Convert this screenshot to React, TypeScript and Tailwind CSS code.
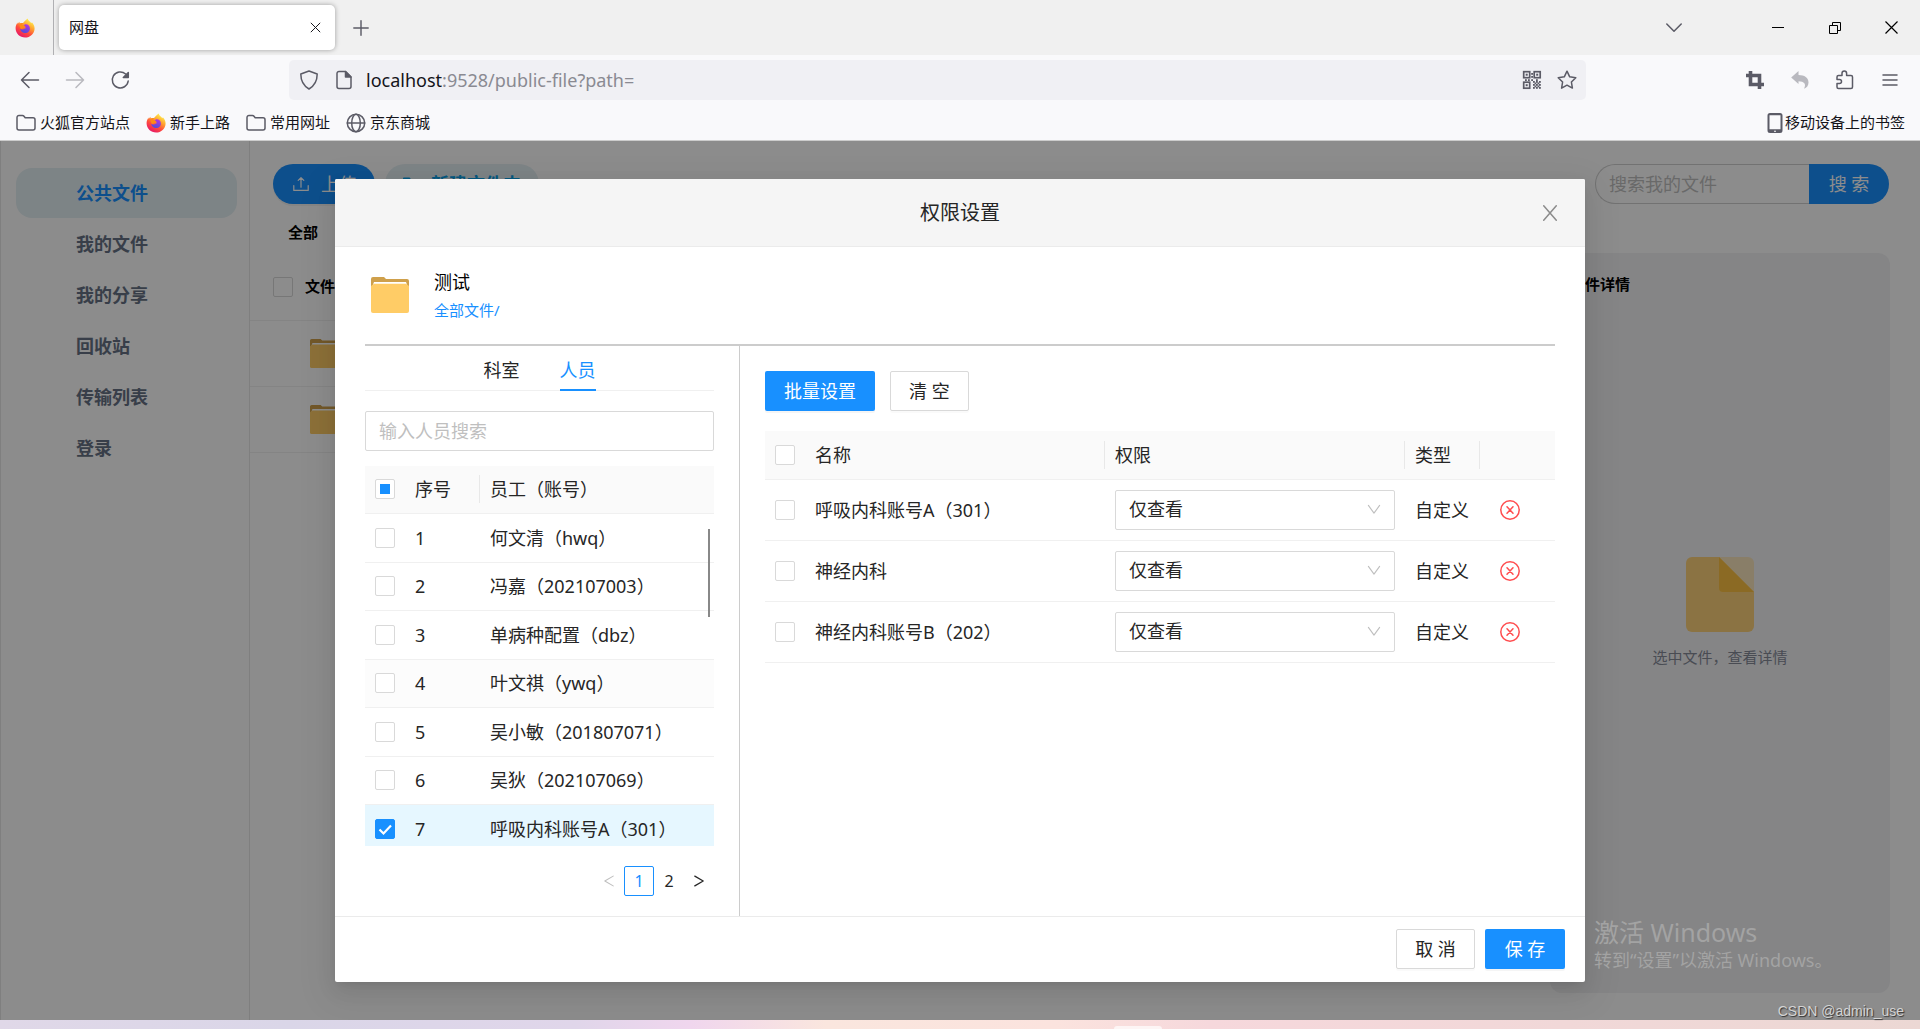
import { useState, type ReactNode } from "react";
import clsx from "clsx";

interface Person {
  id: number;
  name: string;
}

interface Permission {
  id: number;
  name: string;
}

const navItems = ["公共文件", "我的文件", "我的分享", "回收站", "传输列表", "登录"];

const people: Person[] = [
  { id: 1, name: "何文清（hwq）" },
  { id: 2, name: "冯嘉（202107003）" },
  { id: 3, name: "单病种配置（dbz）" },
  { id: 4, name: "叶文祺（ywq）" },
  { id: 5, name: "吴小敏（201807071）" },
  { id: 6, name: "吴狄（202107069）" },
  { id: 7, name: "呼吸内科账号A（301）" },
];

const initialPermissions: Permission[] = [
  { id: 1, name: "呼吸内科账号A（301）" },
  { id: 2, name: "神经内科" },
  { id: 3, name: "神经内科账号B（202）" },
];

/* ---------- icons ---------- */

function FirefoxIcon() {
  return (
    <svg viewBox="0 0 20 20" className="size-5 shrink-0" aria-hidden="true">
      <defs>
        <linearGradient id="ff-body" x1="0.85" y1="0.1" x2="0.3" y2="1">
          <stop offset="0" stopColor="#fff44f" />
          <stop offset="0.35" stopColor="#ffa02f" />
          <stop offset="0.65" stopColor="#ff4a3d" />
          <stop offset="1" stopColor="#e5156b" />
        </linearGradient>
        <linearGradient id="ff-core" x1="0.7" y1="0" x2="0.3" y2="1">
          <stop offset="0" stopColor="#b833e1" />
          <stop offset="1" stopColor="#4a4fd8" />
        </linearGradient>
      </defs>
      <path
        fill="url(#ff-body)"
        d="M12.6.6c.6 2.2 2.4 3 3.8 4.7l.5-1C18.600 6 19.700 8.300 19.600 10.800 19.400 15.800 15.200 19.600 10.100 19.600 4.900 19.600.7 15.600.6 10.600.5 8.500 1.200 6.500 2.500 4.500L2.700 6l1.600-2.200.5 1.800c1-.5 2-.7 3.200-.5C9.300 3.500 10.700 2 12.600.6z"
      />
      <path
        fill="url(#ff-core)"
        d="M10.200 6.200c2.600-.4 4.700 1.600 4.700 4.200 0 2.700-2.100 4.700-4.800 4.700-2.600 0-4.700-1.800-4.900-4.300 1 .8 2.200.9 3.300.4 1-.5 1.500-1 2.600-1 0-.9-1.500-.9-2.500-1.200-.6-.3 0-1.700 1.600-2.800z"
      />
      <path fill="#ff8a16" d="M4.800 5.600c1-.5 2-.7 3.200-.5-.6.800-.9 1.400-.9 2 .8.500 2.200.6 3.100 1 .3.500-.1 1.200-1 1.500-.9.400-1.600 1.400-3 1.300-.6-.5-1-.9-1.200-1.600-.5-1.200-.7-2.500-.2-3.700z" />
    </svg>
  );
}

function LineIcon({ size = 20, width = 1.5, className, children }: { size?: number; width?: number; className?: string; children: ReactNode }) {
  return (
    <svg
      width={size}
      height={size}
      viewBox="0 0 20 20"
      fill="none"
      stroke="currentColor"
      strokeWidth={width}
      strokeLinecap="round"
      strokeLinejoin="round"
      className={clsx("shrink-0", className)}
      aria-hidden="true"
    >
      {children}
    </svg>
  );
}

function BookmarkFolderIcon() {
  return (
    <LineIcon>
      <path d="M1 15V4.500A2 2 0 0 1 3 2.500h3.500a2 2 0 0 1 1.500.7l1.200 1.600H17a2 2 0 0 1 2 2V15a2 2 0 0 1-2 2H3a2 2 0 0 1-2-2z" />
    </LineIcon>
  );
}

function QrIcon() {
  const dots = [
    [11, 11], [14, 11], [17, 11], [12.500, 12.500], [15.500, 12.500], [11, 14], [14, 14], [17, 14],
    [12.500, 15.500], [15.500, 15.500], [11, 17], [14, 17], [17, 17], [9.200, 3], [9.200, 6], [3, 9.200], [6, 9.200], [9.200, 9.200], [14, 9.200],
  ];
  return (
    <svg viewBox="0 0 20 20" className="size-5" fill="currentColor" aria-hidden="true">
      {[[1, 1], [11.500, 1], [1, 11.500]].map(([x, y]) => (
        <g key={`${x}-${y}`}>
          <rect x={x + 0.700} y={y + 0.700} width="6" height="6" fill="none" stroke="currentColor" strokeWidth="1.700" />
          <rect x={x + 2.700} y={y + 2.700} width="2" height="2" />
        </g>
      ))}
      {dots.map(([x, y]) => (
        <rect key={`${x}-${y}`} x={x} y={y} width="1.800" height="1.800" />
      ))}
    </svg>
  );
}

function FolderIcon({ className }: { className: string }) {
  return (
    <svg viewBox="0 0 38 36" preserveAspectRatio="none" className={clsx("shrink-0", className)} aria-hidden="true">
      <path fill="#cfa04b" d="M0 2a2 2 0 0 1 2-2h11l2 2h21a2 2 0 0 1 2 2v8H0z" />
      <path fill="#fff" d="M3 5h32l1.500 4h-35z" />
      <path fill="#ffcc66" d="M0 9l3-2.200h32L38 9v25a2 2 0 0 1-2 2H2a2 2 0 0 1-2-2z" />
    </svg>
  );
}

/* ---------- browser chrome ---------- */

function IconButton({ label, className, children }: { label: string; className?: string; children: ReactNode }) {
  return (
    <button type="button" aria-label={label} className={clsx("flex items-center justify-center", className)}>
      {children}
    </button>
  );
}

function BrowserChrome() {
  return (
    <header className="text-[15px] text-[#15141a]">
      {/* Tab strip */}
      <div className="flex h-[55px] items-center bg-[#f0f0f0]">
        <div className="flex h-full w-[54px] items-center border-r border-[#b0b0b3] pl-[15px]">
          <FirefoxIcon />
        </div>
        <div className="ml-[5px] flex h-[45px] w-[276px] items-center justify-between rounded-[5px] bg-white pl-[10px] pr-2 shadow-[0_0_5px_rgba(0,0,0,0.35)]">
          <span>网盘</span>
          <IconButton label="关闭标签页" className="size-6">
            <LineIcon size={11} width={1.800}>
              <path d="M2 2l16 16M18 2L2 18" />
            </LineIcon>
          </IconButton>
        </div>
        <IconButton label="新建标签页" className="ml-[14px] size-6 text-[#5b5b66]">
          <LineIcon size={16} width={1.800}>
            <path d="M10 1v18M1 10h18" />
          </LineIcon>
        </IconButton>
        <div className="ml-auto flex items-center pr-[13px]">
          <IconButton label="列出所有标签页" className="mr-[72px] size-8 text-[#5b5b66]">
            <LineIcon size={16} width={1.900}>
              <path d="M1 5l9 9 9-9" />
            </LineIcon>
          </IconButton>
          <IconButton label="最小化" className="size-8">
            <svg width="12" height="12" className="text-black" aria-hidden="true">
              <path d="M0 5.500h12" stroke="currentColor" />
            </svg>
          </IconButton>
          <IconButton label="还原" className="ml-[25px] size-8">
            <svg width="12" height="12" fill="none" stroke="#000" aria-hidden="true">
              <path d="M.5 3.500h8v8h-8zM3.500 3.500v-3h8v8h-3" />
            </svg>
          </IconButton>
          <IconButton label="关闭" className="ml-6 size-8">
            <svg width="13" height="13" stroke="#000" strokeWidth="1.200" aria-hidden="true">
              <path d="M.5.5l12 12M12.500.5l-12 12" />
            </svg>
          </IconButton>
        </div>
      </div>

      {/* Address bar */}
      <div className="flex h-[50px] items-center bg-[#f9f9fb] text-[#5b5b66]">
        <div className="flex w-[289px] shrink-0 items-center gap-[25px] pl-5">
          <IconButton label="后退">
            <LineIcon>
              <path d="M18.500 10H1.500M9 2.500L1.500 10 9 17.500" />
            </LineIcon>
          </IconButton>
          <IconButton label="前进" className="opacity-40">
            <LineIcon>
              <path d="M1.500 10h17M11 2.500l7.500 7.500-7.500 7.500" />
            </LineIcon>
          </IconButton>
          <IconButton label="刷新">
            <LineIcon>
              <path d="M15.600 4a8 8 0 1 0 2.600 7" />
              <path d="M18.300 2.500v5h-5z" fill="currentColor" />
            </LineIcon>
          </IconButton>
        </div>
        <div className="flex h-10 flex-1 items-center rounded-[5px] bg-[#f0f0f4] pl-[10px] pr-[9px]">
          <LineIcon>
            <path d="M10 1l8.200 3c0 7-2.200 11.500-8.200 15C4 15.500 1.800 11 1.800 4z" />
          </LineIcon>
          <LineIcon className="ml-[15px]">
            <path d="M11.500 1.500H5a2 2 0 0 0-2 2v13a2 2 0 0 0 2 2h10a2 2 0 0 0 2-2V7z" />
            <path d="M11.500 1.500V7H17z" fill="currentColor" />
          </LineIcon>
          <p className="ml-3 text-[18px] leading-6 text-[#8a8a92]">
            <span className="text-[#15141a]">localhost</span>:9528/public-file?path=
          </p>
          <IconButton label="二维码" className="ml-auto">
            <QrIcon />
          </IconButton>
          <IconButton label="添加书签" className="ml-[15px]">
            <LineIcon>
              <path d="M10 1.200l2.700 5.600 6.100.9-4.400 4.300 1 6.100-5.400-2.900-5.400 2.900 1-6.100L1.200 7.700l6.100-.9z" />
            </LineIcon>
          </IconButton>
        </div>
        <div className="flex items-center gap-[25px] pl-[159px] pr-5">
          <IconButton label="截图">
            <svg viewBox="0 0 20 20" className="size-5" fill="none" stroke="currentColor" strokeWidth="3.600" aria-hidden="true">
              <path d="M5.500 1v13.500H19M1 5.500h13.500V19" />
            </svg>
          </IconButton>
          <IconButton label="撤销" className="opacity-40">
            <svg viewBox="0 0 20 20" className="size-5" fill="currentColor" aria-hidden="true">
              <path d="M1.200 7.500L8.500 1v4c6 0 10 2.700 10 7.500 0 3-1.700 5.300-4.500 6.200 2.600-4.600.2-7.500-5.500-7.500V14z" />
            </svg>
          </IconButton>
          <IconButton label="扩展">
            <LineIcon>
              <path d="M3.500 18.500a1.500 1.500 0 0 1-1.500-1.500v-3.500h2.500a2 2 0 0 0 0-4H2V7a1.500 1.500 0 0 1 1.500-1.500H7V3.300a2.300 2.300 0 0 1 4.600 0v2.200H16A1.500 1.500 0 0 1 17.500 7v10a1.500 1.500 0 0 1-1.500 1.500z" />
            </LineIcon>
          </IconButton>
          <IconButton label="菜单">
            <LineIcon>
              <path d="M3 5h14M3 10h14M3 15h14" />
            </LineIcon>
          </IconButton>
        </div>
      </div>

      {/* Bookmarks */}
      <nav className="flex h-9 items-center gap-4 border-b border-[#ccc] bg-[#f9f9fb] pl-4 pr-[15px]">
        <a href="#" className="flex items-center gap-1">
          <span className="text-[#5b5b66]"><BookmarkFolderIcon /></span>
          火狐官方站点
        </a>
        <a href="#" className="flex items-center gap-1">
          <FirefoxIcon />
          新手上路
        </a>
        <a href="#" className="flex items-center gap-1">
          <span className="text-[#5b5b66]"><BookmarkFolderIcon /></span>
          常用网址
        </a>
        <a href="#" className="flex items-center gap-1">
          <span className="text-[#5b5b66]">
            <LineIcon>
              <circle cx="10" cy="10" r="8.700" />
              <ellipse cx="10" cy="10" rx="4.300" ry="8.700" />
              <path d="M1.300 10h17.400" />
            </LineIcon>
          </span>
          京东商城
        </a>
        <a href="#" className="ml-auto flex items-center gap-[2px]">
          <svg width="16" height="20" viewBox="0 0 16 20" className="text-[#5b5b66]" aria-hidden="true">
            <path fill="currentColor" fillRule="evenodd" d="M3 0h10a2.500 2.500 0 0 1 2.500 2.500v15A2.500 2.500 0 0 1 13 20H3a2.500 2.500 0 0 1-2.500-2.500v-15A2.500 2.500 0 0 1 3 0zM2.500 2.300v14h11v-14zM7 17.800v1h2v-1z" />
          </svg>
          移动设备上的书签
        </a>
      </nav>
    </header>
  );
}

/* ---------- form bits ---------- */

interface CheckboxProps {
  label: string;
  checked: boolean;
  indeterminate?: boolean;
  onChange: () => void;
}

function Checkbox({ label, checked, indeterminate, onChange }: CheckboxProps) {
  return (
    <span className="grid size-5 place-items-center">
      <input
        type="checkbox"
        aria-label={label}
        checked={checked}
        onChange={onChange}
        className="col-start-1 row-start-1 size-5 appearance-none rounded-[2px] border border-[#d9d9d9] bg-white checked:border-[#1890ff] checked:bg-[#1890ff]"
      />
      {indeterminate && <span className="pointer-events-none col-start-1 row-start-1 size-[10px] bg-[#1890ff]" />}
      {checked && (
        <svg viewBox="0 0 20 20" fill="none" stroke="#fff" strokeWidth="2.200" className="pointer-events-none col-start-1 row-start-1 size-5">
          <path d="M4.500 10.500l4 4L16 6.500" />
        </svg>
      )}
    </span>
  );
}

function HeadCell({ divider, children }: { divider?: boolean; children?: ReactNode }) {
  return (
    <th className="p-0 text-left font-normal">
      <div className={clsx("flex h-7 items-center px-[10px]", divider && "border-r border-[#e8e8e8]")}>{children}</div>
    </th>
  );
}

/* ---------- page behind the dialog ---------- */

function FilePage() {
  return (
    <div className="flex flex-1 bg-white">
      <aside className="w-[250px] shrink-0 border-x border-[#e8e8e8] pt-[27px]">
        <ul className="flex flex-col gap-px pl-[15px] pr-3">
          {navItems.map((item, i) => (
            <li key={item}>
              <a
                href="#"
                className={clsx(
                  "flex h-[50px] items-center rounded-2xl pl-[60px] text-[18px] font-bold",
                  i === 0 ? "bg-[#e4f0f4] text-[#1890ff]" : "text-[#667285]"
                )}
              >
                {item}
              </a>
            </li>
          ))}
        </ul>
      </aside>

      <main className="flex flex-1 flex-col pt-[23px]">
        <div className="flex h-10 items-center pl-[23px] pr-[31px]">
          <button type="button" className="flex h-10 items-center gap-3 rounded-full bg-[#1890ff] pl-5 pr-[18px] text-[18px] text-white shadow-[0_2px_0_rgba(0,0,0,0.05)]">
            <LineIcon size={16}>
              <path d="M1 12v6h18v-6M10 14V2M6.500 5.500L10 2l3.500 3.500" />
            </LineIcon>
            上传
          </button>
          <button type="button" className="ml-[10px] flex h-10 items-center gap-3 rounded-full bg-[#e4f0f4] px-[18px] text-[18px] font-bold text-[#0aa0e8]">
            <LineIcon size={16} width={2}>
              <path d="M1 17V3h7l2 3h9v11z" />
            </LineIcon>
            新建文件夹
          </button>
          <form className="ml-auto flex" onSubmit={(e) => e.preventDefault()}>
            <input
              type="text"
              aria-label="搜索我的文件"
              placeholder="搜索我的文件"
              className="h-10 w-[214px] rounded-l-full border border-r-0 border-[#d0d0d0] px-[13px] text-[18px] placeholder:text-[#bfbfbf]"
            />
            <button type="submit" className="h-10 w-20 rounded-r-full bg-[#1890ff] text-[18px] text-white">
              搜 索
            </button>
          </form>
        </div>

        <div className="flex flex-1 pb-[27px] pr-[30px] pt-[15px]">
          <section className="flex-1">
            <p className="pl-[38px] text-[15px] font-bold leading-[26px] text-black">全部</p>
            <div className="flex h-[76px] items-center gap-3 border-b border-[#f0f0f0] pl-[23px] pt-2">
              <Checkbox label="全选文件" checked={false} onChange={() => {}} />
              <span className="text-[15px] font-bold text-black">文件名</span>
            </div>
            <div className="flex h-[66px] items-center border-b border-[#f0f0f0] pl-[60px]">
              <FolderIcon className="h-[29px] w-[31px]" />
            </div>
            <div className="flex h-[66px] items-center border-b border-[#f0f0f0] pl-[60px]">
              <FolderIcon className="h-[29px] w-[31px]" />
            </div>
          </section>
          <section className="mt-[34px] flex w-[340px] flex-col rounded-xl bg-[#f2f2f5] px-5 pt-4">
            <h2 className="text-[15px] font-bold leading-[30px] text-black">文件详情</h2>
            <div className="flex flex-1 flex-col items-center pt-[258px]">
              <svg viewBox="0 0 68 75" className="h-[75px] w-[68px]" aria-hidden="true">
                <path fill="#fae6bd" d="M30 0h32a6 6 0 0 1 6 6v32H30z" />
                <path fill="#fed27a" d="M6 0h27l35 35v34a6 6 0 0 1-6 6H6a6 6 0 0 1-6-6V6a6 6 0 0 1 6-6z" />
                <path fill="#fdc243" d="M33 0l35 35H37a4 4 0 0 1-4-4z" />
              </svg>
              <p className="mt-[13px] text-[15px] leading-6 text-[#858a98]">选中文件，查看详情</p>
            </div>
          </section>
        </div>
      </main>
    </div>
  );
}

/* ---------- dialog ---------- */

function PeoplePanel() {
  const [selected, setSelected] = useState<number[]>([7]);
  const [tab, setTab] = useState("人员");
  const [page, setPage] = useState(1);

  const toggle = (id: number) =>
    setSelected((prev) => (prev.includes(id) ? prev.filter((p) => p !== id) : [...prev, id]));

  return (
    <section className="w-[375px] shrink-0 border-r border-[#ccc] pb-5 pr-[25px]">
      <div role="tablist" className="flex h-[45px] justify-center gap-10 border-b border-[#f0f0f0]">
        {["科室", "人员"].map((t) => (
          <button
            key={t}
            type="button"
            role="tab"
            aria-selected={tab === t}
            onClick={() => setTab(t)}
            className={clsx("-mb-px border-b-2 pt-1 text-[18px]", tab === t ? "border-[#1890ff] text-[#1890ff]" : "border-transparent")}
          >
            {t}
          </button>
        ))}
      </div>

      <input
        type="text"
        aria-label="输入人员搜索"
        placeholder="输入人员搜索"
        className="mt-5 h-10 w-full rounded-[2px] border border-[#d9d9d9] px-[13px] text-[18px] placeholder:text-[#bfbfbf]"
      />

      <div className="relative mt-[15px]">
        <div className="h-[380px] overflow-y-auto [scrollbar-width:none]">
          <table className="w-full table-fixed border-collapse">
            <colgroup>
              <col className="w-10" />
              <col className="w-[75px]" />
              <col />
            </colgroup>
            <thead>
              <tr className="h-[47px] border-b border-[#f0f0f0] bg-[#fafafa]">
                <HeadCell>
                  <Checkbox label="全选人员" checked={false} indeterminate={selected.length > 0} onChange={() => setSelected([])} />
                </HeadCell>
                <HeadCell divider>序号</HeadCell>
                <HeadCell>员工（账号）</HeadCell>
              </tr>
            </thead>
            <tbody>
              {people.map((p) => (
                <tr
                  key={p.id}
                  className={clsx(
                    "h-12 border-b border-[#f0f0f0] odd:h-[49px]",
                    selected.includes(p.id) ? "bg-[#e6f7ff]" : p.id === 4 && "bg-[#fcfcfc]"
                  )}
                >
                  <td className="px-[10px] py-0">
                    <Checkbox label={p.name} checked={selected.includes(p.id)} onChange={() => toggle(p.id)} />
                  </td>
                  <td className="px-[10px] py-0">{p.id}</td>
                  <td className="px-[10px] py-0">{p.name}</td>
                </tr>
              ))}
            </tbody>
          </table>
        </div>
        <div className="absolute right-1 top-[63px] h-[88px] w-[2px] bg-[#888]" />
      </div>

      <nav aria-label="分页" className="mt-5 flex justify-end text-[16px]">
        <IconButton label="上一页" className="size-[30px] text-[#bfbfbf]">
          <LineIcon size={14}>
            <path d="M16 3L4 10l12 7" />
          </LineIcon>
        </IconButton>
        {[1, 2].map((n) => (
          <button
            key={n}
            type="button"
            onClick={() => setPage(n)}
            className={clsx("size-[30px] rounded-[2px] border", page === n ? "border-[#1890ff] text-[#1890ff]" : "border-transparent")}
          >
            {n}
          </button>
        ))}
        <IconButton label="下一页" className="size-[30px]">
          <LineIcon size={14} width={1.800}>
            <path d="M4 3l12 7-12 7" />
          </LineIcon>
        </IconButton>
      </nav>
    </section>
  );
}

function PermissionPanel() {
  const [rows, setRows] = useState(initialPermissions);
  const [checked, setChecked] = useState<number[]>([]);

  const toggle = (id: number) =>
    setChecked((prev) => (prev.includes(id) ? prev.filter((p) => p !== id) : [...prev, id]));
  const allChecked = rows.length > 0 && checked.length === rows.length;

  return (
    <section className="flex-1 pl-[25px] pt-[25px]">
      <div className="flex gap-[15px]">
        <button type="button" className="h-10 rounded-[2px] bg-[#1890ff] px-[19px] text-[18px] text-white shadow-[0_2px_0_rgba(0,0,0,0.04)]">
          批量设置
        </button>
        <button
          type="button"
          onClick={() => setRows([])}
          className="h-10 rounded-[2px] border border-[#d9d9d9] px-[18px] text-[18px] shadow-[0_2px_0_rgba(0,0,0,0.02)]"
        >
          清 空
        </button>
      </div>

      <table className="mt-5 w-full table-fixed border-collapse">
        <colgroup>
          <col className="w-10" />
          <col className="w-[300px]" />
          <col className="w-[300px]" />
          <col className="w-[75px]" />
          <col />
        </colgroup>
        <thead>
          <tr className="h-12 border-b border-[#f0f0f0] bg-[#fafafa]">
            <HeadCell>
              <Checkbox label="全选" checked={allChecked} onChange={() => setChecked(allChecked ? [] : rows.map((r) => r.id))} />
            </HeadCell>
            <HeadCell divider>名称</HeadCell>
            <HeadCell divider>权限</HeadCell>
            <HeadCell divider>类型</HeadCell>
            <HeadCell />
          </tr>
        </thead>
        <tbody>
          {rows.map((row) => (
            <tr key={row.id} className="h-[61px] border-b border-[#f0f0f0]">
              <td className="px-[10px] py-0">
                <Checkbox label={row.name} checked={checked.includes(row.id)} onChange={() => toggle(row.id)} />
              </td>
              <td className="px-[10px] py-0">{row.name}</td>
              <td className="px-[10px] py-0">
                <div className="grid items-center">
                  <select
                    aria-label={`${row.name}权限`}
                    className="col-start-1 row-start-1 h-10 w-full appearance-none rounded-[2px] border border-[#d9d9d9] bg-white px-[13px] pb-[2px] text-[18px]"
                  >
                    <option>仅查看</option>
                  </select>
                  <LineIcon size={14} width={1.600} className="pointer-events-none col-start-1 row-start-1 mr-[14px] justify-self-end text-[#bfbfbf]">
                    <path d="M2 3.500l8 11 8-11" />
                  </LineIcon>
                </div>
              </td>
              <td className="whitespace-nowrap py-0 pl-[10px]">自定义</td>
              <td className="py-0 pl-5">
                <button
                  type="button"
                  aria-label={`删除${row.name}`}
                  onClick={() => setRows((prev) => prev.filter((r) => r.id !== row.id))}
                  className="block text-[#ff4d4f]"
                >
                  <LineIcon>
                    <circle cx="10" cy="10" r="9.200" />
                    <path d="M7 6.700l6 6.600M13 6.700l-6 6.600" />
                  </LineIcon>
                </button>
              </td>
            </tr>
          ))}
        </tbody>
      </table>
    </section>
  );
}

function PermissionDialog() {
  return (
    <div
      role="dialog"
      aria-labelledby="dialog-title"
      className="w-[1250px] max-w-full overflow-hidden rounded-[2px] bg-white text-[18px] leading-7 text-[#262626] shadow-[0_4px_8px_-5px_rgba(0,0,0,0.12),0_8px_20px_rgba(0,0,0,0.08),0_11px_35px_10px_rgba(0,0,0,0.05)]"
    >
      <div className="grid h-[68px] grid-cols-[1fr_auto_1fr] items-center border-b border-[#ebebeb] bg-[#f5f5f5] pt-px">
        <h1 id="dialog-title" className="col-start-2 text-[20px]">权限设置</h1>
        <IconButton label="关闭对话框" className="mr-5 size-[30px] justify-self-end text-[#8c8c8c]">
          <LineIcon size={18} width={1.700}>
            <path d="M3 2l14 16M17 2L3 18" />
          </LineIcon>
        </IconButton>
      </div>

      <div className="px-[30px]">
        <div className="flex h-[99px] gap-[25px] border-b-2 border-[#ccc] pl-[6px] pt-[21px]">
          <FolderIcon className="mt-[9px] h-9 w-[38px]" />
          <div>
            <p className="text-black">测试</p>
            <a href="#" className="block text-[15px] text-[#1890ff]">全部文件/</a>
          </div>
        </div>
        <div className="flex">
          <PeoplePanel />
          <PermissionPanel />
        </div>
      </div>

      <div className="flex justify-end gap-[10px] border-t border-[#ebebeb] pb-[13px] pr-5 pt-3">
        <button type="button" className="h-10 w-[79px] rounded-[2px] border border-[#d9d9d9] shadow-[0_2px_0_rgba(0,0,0,0.02)]">
          取 消
        </button>
        <button type="button" className="h-10 w-20 rounded-[2px] bg-[#1890ff] text-white shadow-[0_2px_0_rgba(0,0,0,0.04)]">
          保 存
        </button>
      </div>
    </div>
  );
}

export default function App() {
  return (
    <div className="relative flex min-h-screen flex-col font-['Noto_Sans','Noto_Sans_CJK_SC',sans-serif]">
      <BrowserChrome />

      <div className="relative flex flex-1 flex-col">
        <FilePage />
        <div className="absolute inset-0 flex items-start justify-center overflow-hidden bg-black/45 pt-[38px]">
          <PermissionDialog />
        </div>
      </div>

      {/* Desktop strip under the window */}
      <div className="flex h-[9px] items-end bg-[linear-gradient(to_right,#e0d8e8,#dad6e8_15%,#e0d6ea_30%,#f0d6ee_36%,#fae6de_43%,#fbe3de_55%,#f6d8dc_63%,#ecd8d4)]">
        <div className="ml-[58%] h-[3px] w-12 rounded-t-[3px] bg-white/70" />
      </div>

      {/* Activation notice and credit sit over everything */}
      <div className="pointer-events-none absolute bottom-[57px] right-[94px] w-[232px] whitespace-nowrap text-[#a3a3a3]">
        <p className="text-[25px] leading-8">激活 Windows</p>
        <p className="text-[18px] leading-6">转到“设置”以激活 Windows。</p>
      </div>
      <p className="pointer-events-none absolute bottom-2 right-4 font-['Liberation_Sans',sans-serif] text-[14px] leading-5 text-[#d4d4d4] [text-shadow:1px_1px_1px_#333]">
        CSDN @admin_use
      </p>
    </div>
  );
}
